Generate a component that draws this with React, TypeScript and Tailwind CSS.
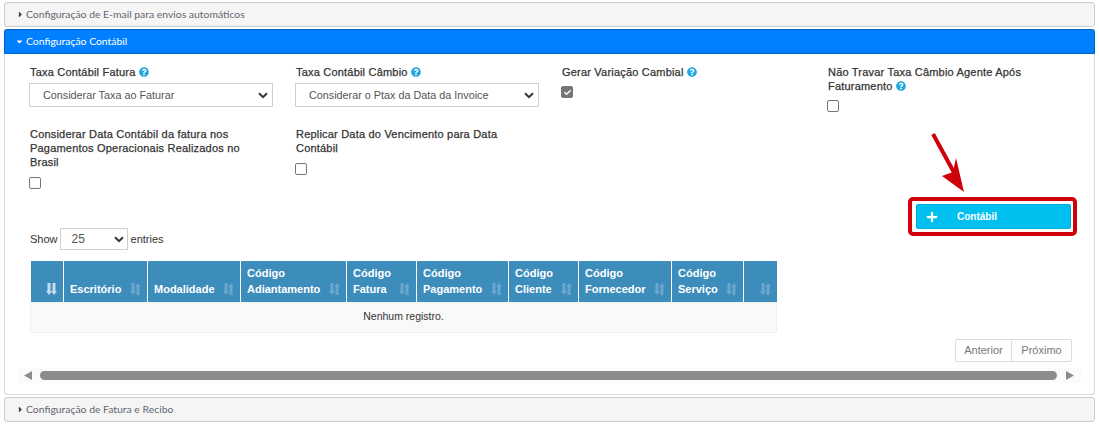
import React from 'react';
import { FaQuestionCircle, FaPlus, FaCaretRight, FaCaretDown, FaCheck } from 'react-icons/fa';

const heading = { fontFamily: 'Lato, sans-serif' };

function Help() {
  return <FaQuestionCircle size={10} className="inline-block ml-[3px] -mt-[2px] text-[#1fa8e0]" />;
}

function Box() {
  return <div className="-ml-px w-3 h-3 rounded-[2px] border border-[#767676] bg-white" />;
}

function SortIcon({ active }: { active?: boolean }) {
  return (
    <svg width="12" height="14" viewBox="0 0 12 14" className={active ? 'text-[#c4dcec]' : 'text-[#6ba6cd]'}>
      <path d="M1.500 1h3v8h1.500l-3 4-3-4h1.500z" fill="currentColor" />
      <path d="M9.500 13h-3V5H5l3-4 3 4H9.500z" fill="currentColor" transform={active ? 'rotate(180 8 7)' : undefined} />
    </svg>
  );
}

function Select({ value, className }: { value: string; className: string }) {
  return (
    <div className={`flex items-center justify-between border border-[#ccd0d6] bg-white text-[#555] font-normal tracking-normal [-webkit-text-stroke:0] ${className}`}>
      <span>{value}</span>
      <svg width="10" height="7" viewBox="0 0 10 7" className="mr-[3px]">
        <path d="M1 1.200 5 5.200 9 1.200" fill="none" stroke="#333" strokeWidth="2" />
      </svg>
    </div>
  );
}

function CollapsedPanel({ title }: { title: string }) {
  return (
    <div className="h-[25px] flex items-center pl-[11px] gap-[1px] bg-[#f5f5f5] border border-[#cbcbcb] rounded-[3px] text-[10.4px] text-[#5f6670]" style={heading}>
      <FaCaretRight size={9} className="text-[#444]" />
      {title}
    </div>
  );
}

const columns = [
  { w: 33, l: [''], active: true },
  { w: 84, l: ['Escritório'] },
  { w: 93, l: ['Modalidade'] },
  { w: 106, l: ['Código', 'Adiantamento'] },
  { w: 70, l: ['Código', 'Fatura'] },
  { w: 92, l: ['Código', 'Pagamento'] },
  { w: 70, l: ['Código', 'Cliente'] },
  { w: 93, l: ['Código', 'Fornecedor'] },
  { w: 72, l: ['Código', 'Serviço'] },
  { w: 33, l: [''] },
];

export default function App() {
  return (
    <div className="relative w-[1099px] h-[424px] overflow-hidden bg-white pt-[2px] px-[4px] text-[11px] text-[#333]" style={{ fontFamily: '"Liberation Sans", Arial, sans-serif' }}>
      <CollapsedPanel title="Configuração de E-mail para envios automáticos" />

      <div className="mt-[2px] h-[366px] border border-t-0 border-[#d9d9d9] rounded-b-[3px] flex flex-col">
        <div className="h-[25px] -mx-px flex items-center pl-[10px] gap-[2px] bg-[#007fff] border border-[#0062cc] rounded-t-[3px] text-[10.4px] text-white" style={heading}>
          <FaCaretDown size={9} />
          Configuração Contábil
        </div>

        <div className="grid grid-cols-[266px_266px_266px_266px] pl-[25px] pt-[11px] leading-[14px] tracking-[0.2px] [-webkit-text-stroke:0.25px_#333]">
          <div className="h-[62px]">
            <div>Taxa Contábil Fatura<Help /></div>
            <Select value="Considerar Taxa ao Faturar" className="mt-[4px] -ml-px w-[244px] h-[24px] pl-[13px] pr-[1px] text-[10.8px]" />
          </div>
          <div>
            <div>Taxa Contábil Câmbio<Help /></div>
            <Select value="Considerar o Ptax da Data da Invoice" className="mt-[4px] -ml-px w-[244px] h-[24px] pl-[13px] pr-[1px] text-[10.8px]" />
          </div>
          <div>
            <div>Gerar Variação Cambial<Help /></div>
            <div className="mt-[7px] -ml-px w-3 h-3 rounded-[2px] bg-[#767676] flex items-center justify-center">
              <FaCheck size={7} className="text-white" />
            </div>
          </div>
          <div>
            <div className="w-[230px]">Não Travar Taxa Câmbio Agente Após Faturamento<Help /></div>
            <div className="mt-[7px]"><Box /></div>
          </div>
          <div className="w-[225px]">
            <div>Considerar Data Contábil da fatura nos Pagamentos Operacionais Realizados no Brasil</div>
            <div className="mt-[8px]"><Box /></div>
          </div>
          <div className="w-[225px]">
            <div>Replicar Data do Vencimento para Data Contábil</div>
            <div className="mt-[8px]"><Box /></div>
          </div>
        </div>

        <div className="flex justify-end pr-[23px] mt-[15px]">
          <button className="w-[155px] h-[25px] flex items-center pl-[9px] rounded-[2px] bg-[#00c0ef] border border-[#00acd6] text-white font-bold text-[10px]">
            <FaPlus size={12} />
            <span className="ml-[19px]">Contábil</span>
          </button>
        </div>

        <div className="flex items-center pl-[25px] h-[22px] -mt-[1px]">
          Show
          <Select value="25" className="ml-[2px] mr-[3px] w-[68px] h-[22px] pl-[11px] text-[12px]" />
          entries
        </div>

        <table className="ml-[25px] mt-[11px] w-[746px] table-fixed border-collapse">
          <colgroup>
            {columns.map((c, i) => <col key={i} style={{ width: c.w }} />)}
          </colgroup>
          <thead>
            <tr className="h-[41px] bg-[#3c8dbc] text-white">
              {columns.map((c, i) => (
                <th key={i} className={`relative align-bottom text-left font-bold leading-[16px] pl-[6px] pb-[5px] ${i > 0 ? 'border-l border-white' : ''}`}>
                  {c.l.map((t, j) => <div key={j}>{t}&nbsp;</div>)}
                  <span className="absolute right-[5px] bottom-[6px]"><SortIcon active={c.active} /></span>
                </th>
              ))}
            </tr>
          </thead>
          <tbody>
            <tr className="h-[30px] bg-[#f9f9f9] border border-[#f0f0f0]">
              <td colSpan={10} className="text-center text-[#333] text-[10.5px]">Nenhum registro.</td>
            </tr>
          </tbody>
        </table>

        <div className="flex justify-end pr-[22px] mt-[6px]">
          <div className="flex h-[23px] border border-[#ddd] rounded-[2px] text-[#777]">
            <div className="w-[56px] flex items-center justify-center border-r border-[#ddd]">Anterior</div>
            <div className="w-[59px] flex items-center justify-center">Próximo</div>
          </div>
        </div>

        <div className="mx-[13px] mt-[6px] h-[15px] bg-[#fbfbfb] flex items-center">
          <svg width="9" height="9" viewBox="0 0 9 9" className="ml-[6px]"><path d="M8 0v9L0 4.500z" fill="#8c8c8c" /></svg>
          <div className="ml-[7px] w-[1017px] h-[9px] rounded-full bg-[#8c8c8c]" />
          <svg width="9" height="9" viewBox="0 0 9 9" className="ml-[8px]"><path d="M1 0v9l8-4.500z" fill="#8c8c8c" /></svg>
        </div>
      </div>

      <div className="mt-[2px]">
        <CollapsedPanel title="Configuração de Fatura e Recibo" />
      </div>

      {/* annotation over the page */}
      <div className="absolute left-[908px] top-[197px] w-[169px] h-[39px] border-[4px] border-[#d0000b] rounded-[5px]" />
      <svg className="absolute left-[925px] top-[128px]" width="50" height="70" viewBox="0 0 50 70">
        <path d="M8 6 32 50" stroke="#d0000b" strokeWidth="4" fill="none" />
        <path d="M39 64 17 48 28 44 31 30z" fill="#d0000b" />
      </svg>
    </div>
  );
}
